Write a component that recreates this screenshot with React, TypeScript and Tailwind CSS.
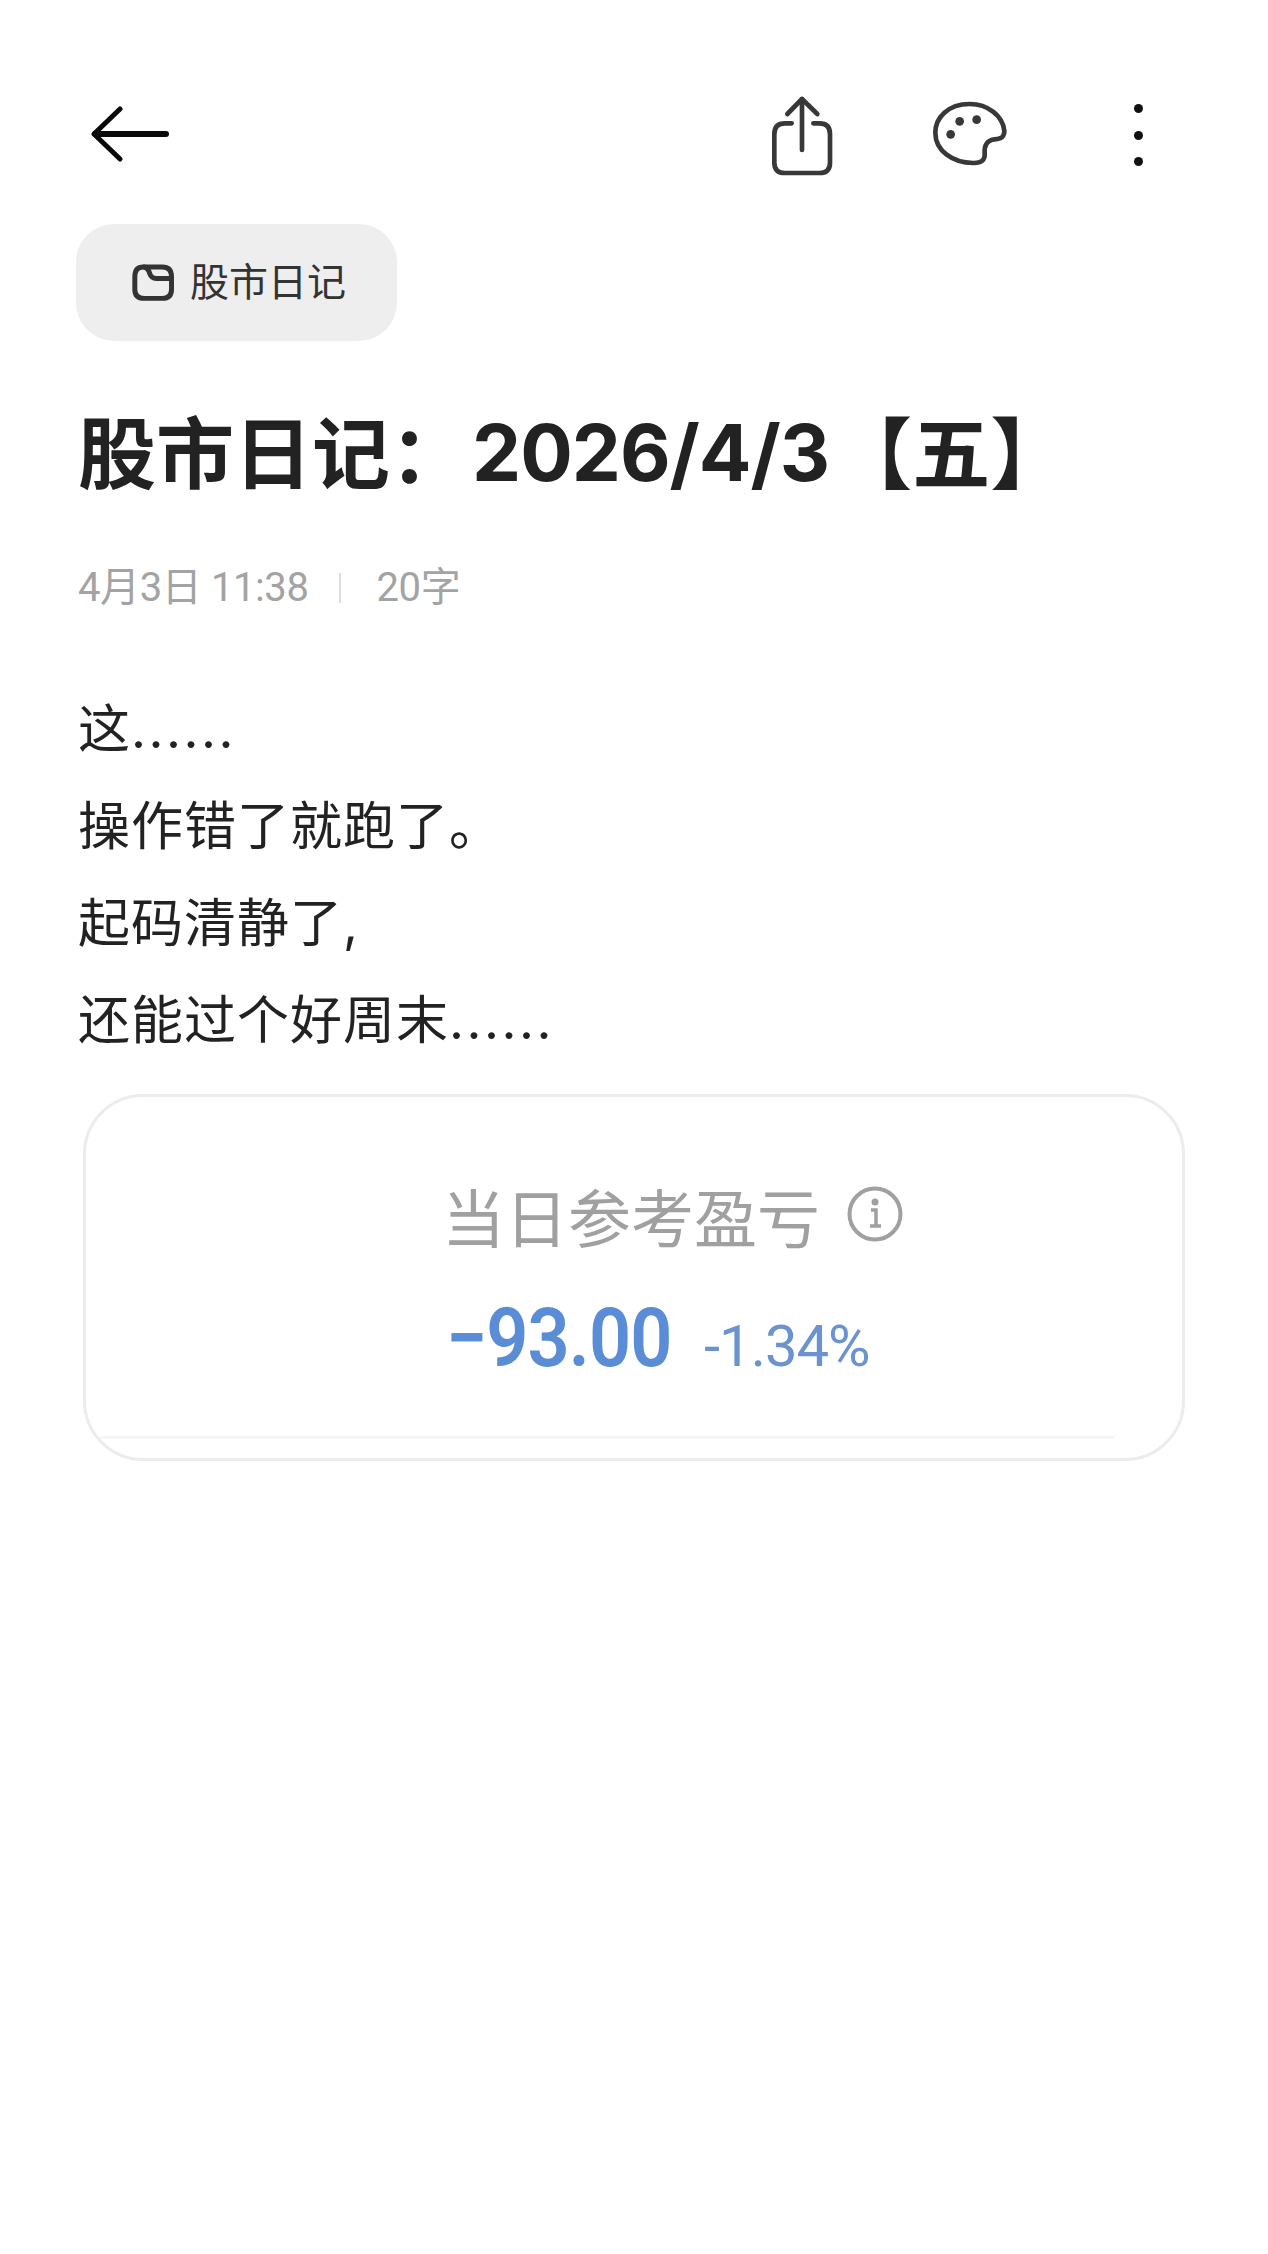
const cjk = { fontFamily: '"Noto Sans CJK SC", sans-serif' };
const num = { fontFamily: 'Inter, "Noto Sans CJK SC", sans-serif' };
const narrow = { fontFamily: 'Roboto, "Noto Sans CJK SC", sans-serif' };

function Back() {
  return (
    <svg width="78" height="56" viewBox="0 0 78 56" fill="none" stroke="#0a0a0a" strokeLinecap="round" strokeLinejoin="round">
      <path d="M29 3 L3 28 L29 53" strokeWidth="5" />
      <path d="M4 28 H75" strokeWidth="6" />
    </svg>
  );
}

function Share() {
  return (
    <svg width="65" height="82" viewBox="90 40 195 246" fill="none" stroke="#383838" strokeWidth="14" strokeLinecap="round" strokeLinejoin="round">
      <path d="M155 125 H135 Q103 125 103 157 V243 Q103 274 135 274 H238 Q270 274 270 243 V157 Q270 125 238 125 H220" />
      <path d="M186 205 V52" />
      <path d="M142 97 L186 52 L232 97" />
    </svg>
  );
}

function Palette() {
  return (
    <svg width="78" height="68" viewBox="574 62 234 204" fill="none" stroke="#383838" strokeWidth="14" strokeLinecap="round" strokeLinejoin="round">
      <path d="M690 74 C625 74 587 115 587 160 C587 215 640 250 700 251 C725 252 737 242 735 222 C733 200 742 182 765 180 C785 179 794 172 794 155 C790 110 745 74 690 74 Z" />
      <circle cx="660" cy="126" r="13" fill="#383838" stroke="none" />
      <circle cx="711" cy="121" r="13" fill="#383838" stroke="none" />
      <circle cx="633" cy="165" r="13" fill="#383838" stroke="none" />
    </svg>
  );
}

function Folder() {
  return (
    <svg width="45" height="39" viewBox="36 38 135 118" fill="none" stroke="#333" strokeWidth="15" strokeLinecap="round" strokeLinejoin="round">
      <path d="M72 50 H130 Q158 50 158 80 V118 Q158 145 130 145 H75 Q47 145 47 118 V80 Q47 50 72 50 Z" />
      <path d="M75 50 Q88 54 92 70 Q97 85 112 85 H156" />
    </svg>
  );
}

function Info() {
  return (
    <svg width="56" height="56" viewBox="0 0 56 56" fill="none" stroke="#a0a0a0" strokeWidth="4">
      <circle cx="28" cy="28" r="25.5" />
      <circle cx="28" cy="16" r="3.5" fill="#a0a0a0" stroke="none" />
      <path d="M24 24 H29 V39 M23 40 H34" strokeWidth="3.5" />
    </svg>
  );
}

export default function App() {
  const lines = ['这......', '操作错了就跑了。', '起码清静了,', '还能过个好周末......'];
  return (
    <div className="w-[1268px] h-[2254px] bg-white overflow-hidden" style={cjk}>
      <header className="h-[224px] pl-[91px] pr-[125px] pt-[95px] flex items-start">
        <div className="mt-[11px]"><Back /></div>
        <div className="ml-auto"><Share /></div>
        <div className="ml-[96px] mt-[5px]"><Palette /></div>
        <div className="ml-[125px] mt-[9px] h-[62px] flex flex-col justify-between">
          <span className="block w-[9px] h-[9px] rounded-full bg-[#111]" />
          <span className="block w-[9px] h-[9px] rounded-full bg-[#111]" />
          <span className="block w-[9px] h-[9px] rounded-full bg-[#111]" />
        </div>
      </header>

      <main className="pl-[78px]">
        <div className="ml-[-2px] w-[321px] h-[117px] rounded-[38px] bg-[#eeeeee] flex items-center pl-[55px] gap-[14px]">
          <Folder />
          <span className="text-[39px] leading-none text-[#333] mt-[-6px]">股市日记</span>
        </div>

        <h1 className="mt-[67px] h-[90px] flex items-center text-[78px] leading-none font-bold text-[#222] whitespace-nowrap" style={cjk}>
          <span className="mt-[-8px]">股市日记{'\uFF1A'}</span>
          <span className="ml-[4px] tracking-[-1px]" style={num}>2026/4/3</span>
          <span className="mt-[-8px] ml-[5px]">【五】</span>
        </h1>

        <div className="mt-[66px] h-[48px] flex items-center text-[40px] leading-none text-[#a3a3a3] tracking-[-0.4px]" style={narrow}>
          <span>4月3日 11:38</span>
          <span className="block w-[2px] h-[30px] bg-[#dddddd] ml-[30px] mr-[36px]" />
          <span>20字</span>
        </div>

        <div className="mt-[69px] flex flex-col text-[52px] leading-[97px] text-[#222] tracking-[1px]" style={num}>
          {lines.map((l) => (
            <p key={l} className="h-[97px] whitespace-nowrap">
              {l.replace(/\.+$/, '')}
              {l.endsWith('.') && <span className="tracking-[2.5px]">......</span>}
            </p>
          ))}
        </div>

        <section className="mt-[25px] ml-[5px] w-[1102px] h-[367px] rounded-[60px] border-[3px] border-[#ececec] flex flex-col">
          <div className="h-[342px] w-[1014px] ml-[14px] border-b-[3px] border-[#f6f6f6] flex flex-col pl-[346px]">
            <div className="mt-[85px] h-[64px] flex items-center gap-[27px]">
              <span className="text-[63px] leading-none text-[#a0a0a0] whitespace-nowrap ml-[-4px]">当日参考盈亏</span>
              <Info />
            </div>
            <div className="mt-[52px] flex items-baseline whitespace-nowrap" style={narrow}>
              <span className="inline-block w-[223px] origin-left scale-x-[0.9] text-[82px] leading-[80px] font-semibold text-[#5b8dd6] tracking-[-1px]">−93.00</span>
              <span className="ml-[35px] text-[58px] leading-[80px] text-[#6b93d0] tracking-[-1px]">-1.34%</span>
            </div>
          </div>
        </section>
      </main>
    </div>
  );
}
